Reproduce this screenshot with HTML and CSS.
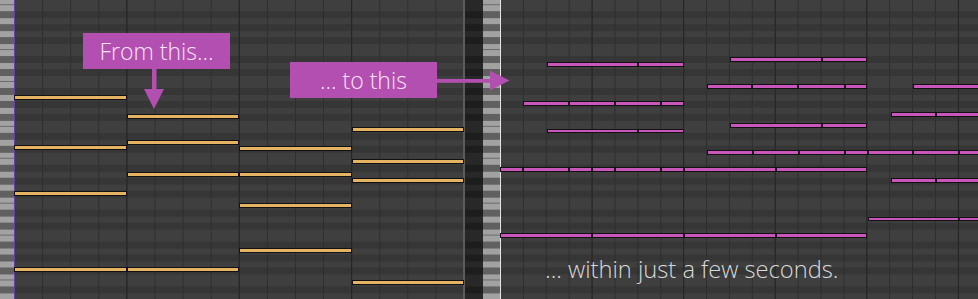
FILE: index.html
```html
<!DOCTYPE html>
<html lang="en">
  <head>
    <meta charset="UTF-8" />
    <title>Piano roll • before and after</title>
    <link rel="stylesheet" href="styles.css">
  </head>
  <body>
    <div class="editor">
      <div class="keys keys-light"></div>
      <div class="roll roll-before" id="before"></div>
      <div class="split"></div>
      <div class="keys keys-dark"></div>
      <div class="keys keys-light keys-edge"></div>
      <div class="roll roll-after" id="after"></div>

      <div class="callout callout-from">From this...</div>
      <svg class="arrow arrow-down" width="22" height="40" viewBox="0 0 22 40">
        <rect x="9" y="0" width="4.5" height="21" />
        <polygon points="1,20 21,20 11,40" />
      </svg>

      <div class="callout callout-to">... to this</div>
      <svg class="arrow arrow-right" width="74" height="21" viewBox="0 0 74 21">
        <rect x="0" y="9" width="54" height="3.8" />
        <polygon points="53,0.7 53,20.3 72.5,10.5" />
      </svg>

      <p class="caption">... within just a few seconds.</p>
    </div>

    <script>
      // [top, height, [x1, x2, x3...]] in page pixels, segments share edges
      const beforeNotes = [
        [95, 5, [14, 127]],
        [145, 5, [14, 127]],
        [191, 5, [14, 127]],
        [267, 5, [14, 127]],
        [114, 5, [127, 239]],
        [140, 5, [127, 239]],
        [172, 5, [127, 239]],
        [267, 5, [127, 239]],
        [146, 5, [239, 352]],
        [172, 5, [239, 352]],
        [203, 5, [239, 352]],
        [248, 5, [239, 352]],
        [127, 5, [352, 464]],
        [159, 5, [352, 464]],
        [178, 5, [352, 464]],
        [280, 5, [352, 464]],
      ];

      const afterNotes = [
        [57, 5, [730, 822, 867]],
        [62, 5, [547, 638, 684]],
        [84, 5, [707, 752, 798, 845, 867]],
        [84, 5, [913, 980]],
        [101, 5, [523, 569, 615, 661, 684]],
        [112, 5, [891, 936, 980]],
        [123, 5, [730, 822, 867]],
        [129, 4, [547, 638, 684]],
        [150, 5, [707, 753, 799, 845, 868, 913, 959, 980]],
        [167, 5, [500, 523, 569, 592, 615, 661, 684, 776, 867]],
        [178, 5, [891, 936, 980]],
        [217, 4, [868, 959, 980]],
        [233, 5, [500, 592, 684, 776, 867]],
      ];

      function drawNotes(rollId, notes, originX, colorClass) {
        const roll = document.getElementById(rollId);
        notes.forEach(([top, height, edges]) => {
          for (let i = 0; i < edges.length - 1; i++) {
            const note = document.createElement("div");
            note.className = `note ${colorClass}`;
            note.style.left = `${edges[i] - originX}px`;
            note.style.top = `${top}px`;
            note.style.width = `${edges[i + 1] - edges[i]}px`;
            note.style.height = `${height}px`;
            roll.appendChild(note);
          }
        });
      }

      drawNotes("before", beforeNotes, 15, "note-orange");
      drawNotes("after", afterNotes, 501, "note-pink");
    </script>
  </body>
</html>
```

FILE: styles.css
```css
body {
  margin: 0;
  background-color: #3a3a3a;
  font-family: "Open Sans", "Noto Sans", sans-serif;
}
.editor {
  position: relative;
  display: flex;
  width: 978px;
  height: 299px;
  overflow: hidden;
}
.keys {
  height: 100%;
  background-size: 100% 76.8px;
  background-position: 0 5.2px;
}
.keys-light {
  width: 14px;
  border-right: 1px solid #6a3ea8;
  background-image: linear-gradient(
    to bottom,
    #a2a2a2 0 5.6px,
    #606060 5.6px 12.8px,
    #a2a2a2 12.8px 19.2px,
    #606060 19.2px 25.6px,
    #a2a2a2 25.6px 32px,
    #606060 32px 38.4px,
    #a2a2a2 38.4px 44px,
    #6a6a6a 44px 44.8px,
    #a2a2a2 44.8px 51.2px,
    #606060 51.2px 57.6px,
    #a2a2a2 57.6px 64px,
    #606060 64px 70.4px,
    #a2a2a2 70.4px 76px,
    #6a6a6a 76px 76.8px
  );
}
.keys-dark {
  width: 18px;
  background-image: linear-gradient(
    to bottom,
    #282828 0 6.4px,
    #1d1d1d 6.4px 12.8px,
    #282828 12.8px 19.2px,
    #1d1d1d 19.2px 25.6px,
    #282828 25.6px 32px,
    #1d1d1d 32px 38.4px,
    #282828 38.4px 51.2px,
    #1d1d1d 51.2px 57.6px,
    #282828 57.6px 64px,
    #1d1d1d 64px 70.4px,
    #282828 70.4px 76.8px
  );
}
.keys-edge {
  width: 17px;
  border-right: 1px solid #e4e4e4;
}
.split {
  width: 2px;
  background-color: #5c5c5c;
}
.roll {
  position: relative;
  height: 100%;
  --rows: linear-gradient(
    to bottom,
    #3f3f3f 0 6.4px,
    #363636 6.4px 12.8px,
    #3f3f3f 12.8px 19.2px,
    #363636 19.2px 25.6px,
    #3f3f3f 25.6px 32px,
    #363636 32px 38.4px,
    #3f3f3f 38.4px 51.2px,
    #363636 51.2px 57.6px,
    #3f3f3f 57.6px 64px,
    #363636 64px 70.4px,
    #3f3f3f 70.4px 76.8px
  );
}
.roll-before {
  width: 448px;
  background:
    linear-gradient(to left, #242424 1px, transparent 1px) 0 0 / 112.4px 100%,
    linear-gradient(to left, #2e2e2e 1px, transparent 1px) 0 0 / 28.1px 100%,
    var(--rows) 0 5.2px / 100% 76.8px;
}
.roll-after {
  flex: 1;
  background:
    linear-gradient(to right, #252525 1px, transparent 1px) -1px 0 / 91.6px 100%,
    linear-gradient(to right, #2e2e2e 1px, transparent 1px) -1px 0 / 22.9px 100%,
    var(--rows) 0 5.2px / 100% 76.8px;
}
.note {
  position: absolute;
  box-sizing: border-box;
  border: 1px solid #141014;
}
.note-orange {
  background-color: #e4b463;
}
.note-pink {
  background-color: #c956bb;
}
.callout {
  position: absolute;
  width: 147px;
  height: 36px;
  background-color: #b24fb0;
  color: #f7e4f5;
  font-size: 23px;
  font-weight: 300;
  line-height: 36px;
  text-align: center;
}
.callout-from {
  left: 83px;
  top: 33px;
}
.callout-to {
  left: 290px;
  top: 62px;
}
.arrow {
  position: absolute;
  fill: #b24fb0;
}
.arrow-down {
  left: 143px;
  top: 69px;
}
.arrow-right {
  left: 437px;
  top: 70px;
}
.caption {
  position: absolute;
  left: 545px;
  top: 258px;
  margin: 0;
  color: #d9d9d9;
  font-size: 23.7px;
  font-weight: 300;
  line-height: 23px;
}
```
